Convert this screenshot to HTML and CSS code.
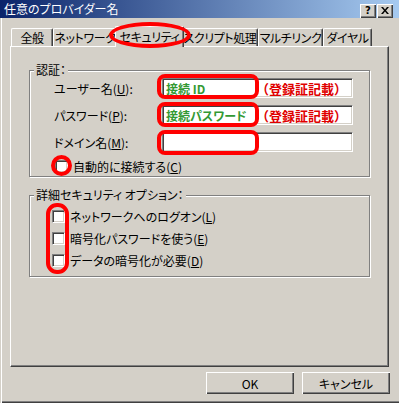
FILE: index.html
```html
<!DOCTYPE html>
<html lang="ja">
<head>
  <meta charset="UTF-8" />
  <title>任意のプロバイダー名</title>
  <link rel="stylesheet" href="styles.css">
</head>
<body>
  <div class="window">
    <div class="titlebar">
      <span class="title">任意のプロバイダー名</span>
      <div class="title-buttons">
        <span class="tbtn help">?</span>
        <span class="tbtn">
          <svg width="8" height="7" viewBox="0 0 8 7"><path d="M0 0h2l2 2.5L6 0h2L5 3.5 8 7H6L4 4.5 2 7H0l3-3.5z" fill="#000"/></svg>
        </span>
      </div>
    </div>

    <div class="tabs">
      <div class="tab tab-general">全般</div>
      <div class="tab tab-network">ネットワーク</div>
      <div class="tab tab-security active">セキュリティ</div>
      <div class="tab tab-script">スクリプト処理</div>
      <div class="tab tab-multilink">マルチリンク</div>
      <div class="tab tab-dial">ダイヤル</div>
    </div>

    <div class="panel">
      <fieldset class="group auth">
        <legend>認証：</legend>
        <div class="form-grid">
          <label>ユーザー名(<u>U</u>):</label>
          <div class="field">
            <span class="given">接続 ID</span>
            <span class="note">（登録証記載）</span>
          </div>

          <label>パスワード(<u>P</u>):</label>
          <div class="field">
            <span class="given">接続パスワード</span>
            <span class="note">（登録証記載）</span>
          </div>

          <label>ドメイン名(<u>M</u>):</label>
          <div class="field"></div>

          <div class="check-row auto">
            <span class="checkbox"></span>
            <span>自動的に接続する(<u>C</u>)</span>
          </div>
        </div>
      </fieldset>

      <fieldset class="group options">
        <legend>詳細セキュリティ オプション：</legend>
        <div class="check-list">
          <div class="check-row">
            <span class="checkbox"></span>
            <span>ネットワークへのログオン(<u>L</u>)</span>
          </div>
          <div class="check-row">
            <span class="checkbox"></span>
            <span>暗号化パスワードを使う(<u>E</u>)</span>
          </div>
          <div class="check-row">
            <span class="checkbox"></span>
            <span>データの暗号化が必要(<u>D</u>)</span>
          </div>
        </div>
      </fieldset>
    </div>

    <div class="buttons">
      <button class="btn">OK</button>
      <button class="btn">キャンセル</button>
    </div>

    <!-- red marks drawn over the dialog -->
    <div class="mark mark-tab"></div>
    <div class="mark mark-field mark-user"></div>
    <div class="mark mark-field mark-pass"></div>
    <div class="mark mark-field mark-domain"></div>
    <div class="mark mark-auto"></div>
    <div class="mark mark-options"></div>
  </div>
</body>
</html>
```

FILE: styles.css
```css
:root {
  --face: #d4d0c8;
  --light: #ffffff;
  --shadow: #808080;
  --dark: #404040;
  --mark: #ff0000;
}

body {
  margin: 0;
  font-family: "Noto Sans CJK JP", "Noto Sans", sans-serif;
  font-size: 12px;
  font-feature-settings: "palt" 1;
  color: #000;
  background: var(--face);
}

.window {
  position: relative;
  width: 399px;
  height: 403px;
  background: var(--face);
  box-shadow: inset 1px 0 var(--face), inset 2px 0 var(--light),
    inset 0 -1px var(--dark), inset 0 -2px var(--shadow);
  overflow: hidden;
}

.titlebar {
  height: 18px;
  display: flex;
  align-items: center;
  justify-content: space-between;
  padding: 0 6px 0 4px;
  background: linear-gradient(to right, #0a246a, #a6caf0);
  color: #fff;
}

.title {
  line-height: 18px;
}

.title-buttons {
  display: flex;
  gap: 1px;
  margin-top: 3px;
}

.tbtn {
  width: 16px;
  height: 14px;
  display: flex;
  align-items: center;
  justify-content: center;
  background: var(--face);
  box-shadow: inset 1px 1px var(--light), inset -1px -1px var(--dark),
    inset -2px -2px var(--shadow);
  color: #000;
}

.help {
  font-family: "DejaVu Sans", sans-serif;
  font-weight: bold;
  font-size: 10px;
  line-height: 14px;
}

.tabs {
  display: flex;
  align-items: flex-end;
  height: 20px;
  margin: 8px 0 0 11px;
  position: relative;
  z-index: 1;
}

.tab {
  flex: none;
  height: 18px;
  line-height: 17px;
  text-align: center;
  white-space: nowrap;
  letter-spacing: -0.4px;
  border-top: 1px solid var(--light);
  border-left: 1px solid var(--light);
  border-right: 1px solid var(--dark);
  border-radius: 2px 2px 0 0;
  box-shadow: inset -1px 0 var(--shadow);
  box-sizing: border-box;
  background: var(--face);
}

.tab-general { width: 42px; }
.tab-network { width: 64px; }
.tab-security { width: 65px; }
.tab-script { width: 76px; }
.tab-multilink { width: 65px; }
.tab-dial { width: 49px; }

.tab.active {
  width: 69px;
  height: 21px;
  margin: 0 -2px -1px -2px;
  line-height: 20px;
  position: relative;
  z-index: 2;
}

.panel {
  width: 379px;
  height: 321px;
  margin-left: 10px;
  box-sizing: border-box;
  border-top: 1px solid var(--light);
  border-left: 1px solid var(--light);
  border-right: 1px solid var(--dark);
  border-bottom: 1px solid var(--dark);
  box-shadow: inset -1px -1px var(--shadow);
  padding: 16px 18px 0 18px;
}

.group {
  margin: 0;
  padding: 0;
  border: 1px solid var(--shadow);
  box-shadow: inset 1px 1px var(--light), 1px 1px var(--light);
  min-width: 0;
}

.group legend {
  margin-left: 4px;
  padding: 0 2px;
  line-height: 14px;
  background: var(--face);
}

.form-grid {
  display: grid;
  grid-template-columns: 108px 191px;
  grid-template-rows: 20px 20px 20px 14px;
  row-gap: 7px;
  padding: 1px 0 3px 24px;
  align-items: center;
}

.field {
  height: 20px;
  box-sizing: border-box;
  display: flex;
  align-items: center;
  justify-content: space-between;
  padding: 0 5px 0 3px;
  background: #fff;
  border-top: 1px solid var(--shadow);
  border-left: 1px solid var(--shadow);
  border-right: 1px solid var(--light);
  border-bottom: 1px solid var(--light);
  box-shadow: inset 1px 1px var(--dark), inset -1px -1px var(--face);
  font-weight: bold;
}

.given {
  color: #339933;
}

.note {
  color: #e00000;
  font-size: 13px;
  font-feature-settings: normal;
}

.check-row {
  display: flex;
  align-items: center;
  gap: 5px;
  height: 16px;
}

.check-row.auto {
  grid-column: 1 / -1;
  height: 14px;
  margin-left: 1px;
}

.checkbox {
  width: 13px;
  height: 13px;
  box-sizing: border-box;
  flex: none;
  background: #fff;
  border-top: 1px solid var(--shadow);
  border-left: 1px solid var(--shadow);
  border-right: 1px solid var(--light);
  border-bottom: 1px solid var(--light);
  box-shadow: inset 1px 1px var(--dark), inset -1px -1px var(--face);
}

.options {
  margin-top: 11px;
}

.check-list {
  display: flex;
  flex-direction: column;
  gap: 6px;
  padding: 6px 0 8px 22px;
}

.buttons {
  display: flex;
  justify-content: flex-end;
  gap: 8px;
  padding: 5px 9px 0 0;
}

.btn {
  width: 88px;
  height: 22px;
  padding: 0;
  font: inherit;
  color: #000;
  background: var(--face);
  border: none;
  box-shadow: inset 1px 1px var(--light), inset -1px -1px var(--dark),
    inset -2px -2px var(--shadow);
}

.mark {
  position: absolute;
  box-sizing: border-box;
  border: 4px solid var(--mark);
  z-index: 5;
}

.mark-tab {
  left: 109px;
  top: 22px;
  width: 82px;
  height: 26px;
  border-radius: 50%;
}

.mark-field {
  left: 157px;
  width: 102px;
  height: 25px;
  border-radius: 8px;
}

.mark-user { top: 74px; }
.mark-pass { top: 102px; }
.mark-domain { top: 130px; }

.mark-auto {
  left: 51px;
  top: 155px;
  width: 21px;
  height: 21px;
  border-radius: 50%;
}

.mark-options {
  left: 46px;
  top: 203px;
  width: 23px;
  height: 71px;
  border-radius: 11px;
}
```
